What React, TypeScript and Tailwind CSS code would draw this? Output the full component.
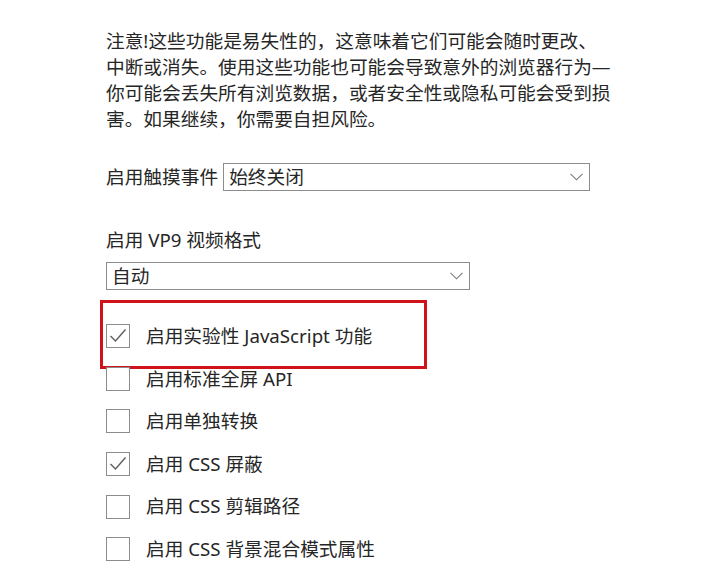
import { useState } from 'react';

const font = {
  fontFamily: '"Noto Sans", "Noto Sans CJK SC", sans-serif',
};

const notice = [
  '注意!这些功能是易失性的，这意味着它们可能会随时更改、',
  '中断或消失。使用这些功能也可能会导致意外的浏览器行为—',
  '你可能会丢失所有浏览数据，或者安全性或隐私可能会受到损',
  '害。如果继续，你需要自担风险。',
];

const flags = [
  { label: '启用实验性 JavaScript 功能', checked: true },
  { label: '启用标准全屏 API', checked: false },
  { label: '启用单独转换', checked: false },
  { label: '启用 CSS 屏蔽', checked: true },
  { label: '启用 CSS 剪辑路径', checked: false },
  { label: '启用 CSS 背景混合模式属性', checked: false },
];

function Chevron() {
  return (
    <svg width="13" height="8" viewBox="0 0 13 8" fill="none" className="shrink-0">
      <path d="M0.5 0.8 L6.5 6.8 L12.5 0.8" stroke="#7a7a7a" strokeWidth="1.1" />
    </svg>
  );
}

function Select({ value, className }: { value: string; className: string }) {
  return (
    <div
      className={`flex h-[28px] items-center justify-between border-[1.5px] border-[#8c8c8c] bg-white pl-[5px] pr-[6px] ${className}`}
    >
      <span className="leading-none">{value}</span>
      <Chevron />
    </div>
  );
}

function Checkbox({ checked, onClick }: { checked: boolean; onClick: () => void }) {
  return (
    <button
      onClick={onClick}
      className="flex h-[24px] w-[24px] shrink-0 items-center justify-center border-[1.5px] border-[#8c8c8c] bg-white"
    >
      {checked && (
        <svg width="22" height="22" viewBox="0 0 22 22" fill="none">
          <path d="M3.5 11 L8.5 16 L18.5 4.5" stroke="#5e5e5e" strokeWidth="1.4" />
        </svg>
      )}
    </button>
  );
}

export default function App() {
  const [checks, setChecks] = useState(flags.map((f) => f.checked));

  const toggle = (i: number) => {
    setChecks((prev) => prev.map((c, j) => (j === i ? !c : c)));
  };

  return (
    <div className="h-[584px] w-[726px] overflow-hidden bg-white pl-[106px] pt-[28px] text-[18.7px] text-[#262626]" style={font}>
      {/* 警告说明 */}
      <div className="leading-[26px]">
        {notice.map((line) => (
          <div key={line} className="whitespace-nowrap">
            {line}
          </div>
        ))}
      </div>

      {/* 触摸事件 */}
      <div className="mt-[31px] flex items-center gap-[5px]">
        <span className="leading-[28px]">启用触摸事件</span>
        <Select value="始终关闭" className="w-[367px]" />
      </div>

      {/* VP9 */}
      <div className="mt-[36px] leading-[26px]">启用 VP9 视频格式</div>
      <Select value="自动" className="mt-[9px] w-[364px]" />

      {/* 复选框列表 */}
      <div className="mt-[25px] flex flex-col">
        {flags.map((flag, i) => (
          <div key={flag.label} className="relative flex h-[42.6px] items-center gap-[16px]">
            <Checkbox checked={checks[i]} onClick={() => toggle(i)} />
            <span className="leading-none">{flag.label}</span>
            {i === 0 && (
              <div className="pointer-events-none absolute left-[-6px] top-[-15px] h-[69px] w-[327px] border-[3px] border-[#d0121b]" />
            )}
          </div>
        ))}
      </div>
    </div>
  );
}
